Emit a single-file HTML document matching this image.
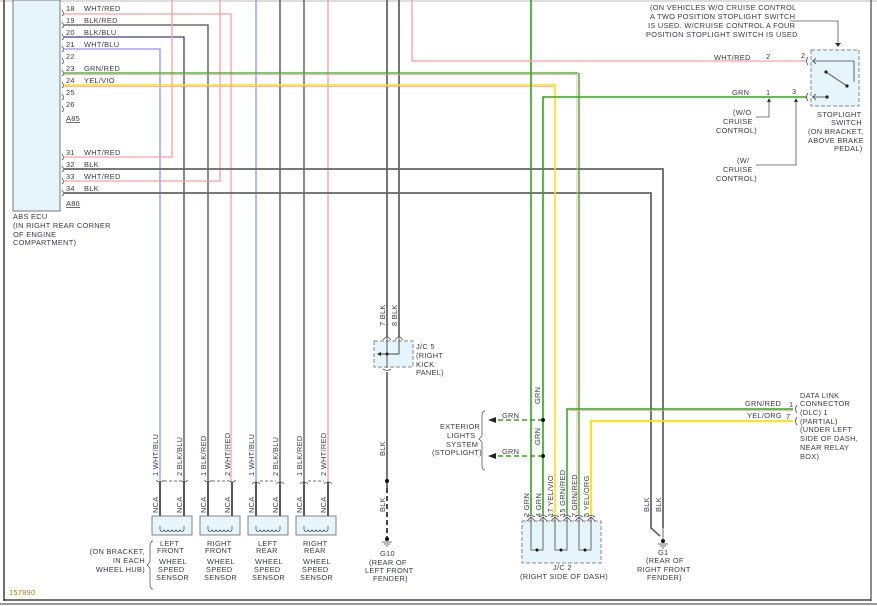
<!DOCTYPE html>
<html><head><meta charset="utf-8"><style>
html,body{margin:0;padding:0;background:#fff;width:877px;height:606px;overflow:hidden}
svg{display:block}
text{font-family:"Liberation Sans",sans-serif;font-size:7.4px;fill:#3a3a4a;letter-spacing:0.3px}
</style></head><body>
<svg width="877" height="606" viewBox="0 0 877 606" xmlns="http://www.w3.org/2000/svg">
<line x1="0" y1="1" x2="877" y2="1" stroke="#ddd" stroke-width="2"/>
<line x1="4" y1="0" x2="4" y2="601" stroke="#222" stroke-width="1.3"/>
<line x1="871" y1="0" x2="871" y2="601" stroke="#444" stroke-width="1.2"/>
<line x1="4" y1="600" x2="871" y2="600" stroke="#222" stroke-width="1.3"/>
<line x1="0" y1="604" x2="877" y2="604" stroke="#999" stroke-width="2"/>
<text x="9" y="595" style="fill:#b08000">157890</text>

<rect x="13" y="0" width="47" height="211" fill="#e6f4fb" stroke="#777" stroke-width="1"/>
<g>
<text x="66" y="11">18</text><text x="84" y="11">WHT/RED</text>
<text x="66" y="23">19</text><text x="84" y="23">BLK/RED</text>
<text x="66" y="35">20</text><text x="84" y="35">BLK/BLU</text>
<text x="66" y="47">21</text><text x="84" y="47">WHT/BLU</text>
<text x="66" y="59">22</text>
<text x="66" y="71">23</text><text x="84" y="71">GRN/RED</text>
<text x="66" y="83">24</text><text x="84" y="83">YEL/VIO</text>
<text x="66" y="95">25</text>
<text x="66" y="107">26</text>
<text x="66" y="121" text-decoration="underline">A85</text>
<text x="66" y="155">31</text><text x="84" y="155">WHT/RED</text>
<text x="66" y="167">32</text><text x="84" y="167">BLK</text>
<text x="66" y="179">33</text><text x="84" y="179">WHT/RED</text>
<text x="66" y="191">34</text><text x="84" y="191">BLK</text>
<text x="66" y="206" text-decoration="underline">A86</text>
<text x="13" y="219">ABS ECU</text>
<text x="13" y="228">(IN RIGHT REAR CORNER</text>
<text x="13" y="237">OF ENGINE</text>
<text x="13" y="245">COMPARTMENT)</text>
</g>
<g fill="none" stroke="#555" stroke-width="0.8">
<path d="M62 10 q3 4 0 6M62 22 q3 4 0 6M62 34 q3 4 0 6M62 46 q3 4 0 6M62 58 q3 4 0 6M62 70 q3 4 0 6M62 82 q3 4 0 6M62 94 q3 4 0 6M62 106 q3 4 0 6M62 154 q3 4 0 6M62 166 q3 4 0 6M62 178 q3 4 0 6M62 190 q3 4 0 6"/>
</g>

<g fill="none" stroke-width="1.3">
<path d="M64 14 H231 V482" stroke="#f4a0a0"/>
<path d="M64 25 H208 V482" stroke="#5a4a4a"/>
<path d="M64 37 H184 V482" stroke="#40407a"/>
<path d="M64 49 H160 V482" stroke="#9090ff"/>
<path d="M172 0 V157 H64" stroke="#f4a0a0"/>
<path d="M220 0 V181 H64" stroke="#f4a0a0"/>
<path d="M256 0 V482" stroke="#9090ff"/>
<path d="M280 0 V482" stroke="#40407a"/>
<path d="M304 0 V482" stroke="#5a4a4a"/>
<path d="M328 0 V482" stroke="#f4a0a0"/>
<path d="M64 169 H663 V528" stroke="#666" stroke-width="1.8"/>
<path d="M64 193 H651 V528 L660 536" stroke="#666" stroke-width="1.8"/>
<path d="M387 0 V336" stroke="#666" stroke-width="1.8"/>
<path d="M399 0 V336" stroke="#666" stroke-width="1.8"/>
<path d="M64 73 H578" stroke="#3aa022" stroke-width="1.3"/>
<path d="M64 74.5 H577 V515" stroke="#f4a0a0" stroke-width="0.8"/>
<path d="M579 73 V515" stroke="#3aa022"/>
<path d="M64 85 H555 V515" stroke="#ffe000" stroke-width="1.6"/>
<path d="M64 86.5 H553.5" stroke="#f090f0" stroke-width="0.8"/>
<path d="M531 0 V515" stroke="#3aa022" stroke-width="1.6"/>
<path d="M806 97 H543 V515" stroke="#3aa022" stroke-width="1.6"/>
<path d="M806 61 H412 V0" stroke="#f4a0a0"/>
<path d="M793 409 H567 V515" stroke="#3aa022" stroke-width="1.5"/>
<path d="M793 410.5 H568.5" stroke="#f4a0a0" stroke-width="0.7"/>
<path d="M793 421 H591 V515" stroke="#ffe000" stroke-width="1.8"/>
</g>

<text x="650" y="10">(ON VEHICLES W/O CRUISE CONTROL</text>
<text x="650" y="19">A TWO POSITION STOPLIGHT SWITCH</text>
<text x="648" y="28">IS USED. W/CRUISE CONTROL A FOUR</text>
<text x="646" y="37">POSITION STOPLIGHT SWITCH IS USED</text>
<path d="M790 21 H838 V44" fill="none" stroke="#555" stroke-width="0.8"/>
<path d="M835 43 L838 47 L841 43Z" fill="#333"/>
<rect x="811" y="50" width="48" height="56" fill="#e6f4fb" stroke="#888" stroke-width="1" stroke-dasharray="4,2"/>
<path d="M812 61 H854 V82" fill="none" stroke="#444" stroke-width="0.8"/>
<path d="M826 72 L847 86" stroke="#444" stroke-width="0.8"/>
<circle cx="826" cy="72" r="1.6" fill="#222"/><circle cx="847" cy="86" r="1.6" fill="#222"/>
<path d="M812 97 H827" stroke="#444" stroke-width="0.8"/><circle cx="827" cy="97" r="1.6" fill="#222"/>
<path d="M808 57 q-3 4 0 8 M808 93 q-3 4 0 8 M816 58 l-3 3 3 3 M816 94 l-3 3 3 3" fill="none" stroke="#444" stroke-width="0.8"/>
<text x="714" y="60">WHT/RED</text><text x="766" y="59">2</text><text x="801" y="58">2</text>
<text x="732" y="95">GRN</text><text x="766" y="95">1</text><text x="792" y="94">3</text>
<path d="M769 99 V117 H756" fill="none" stroke="#555" stroke-width="0.8"/><path d="M767 102 L769 98 L771 102Z" fill="#333"/>
<path d="M796 99 V165 H756" fill="none" stroke="#555" stroke-width="0.8"/><path d="M794 102 L796 98 L798 102Z" fill="#333"/>
<text x="733" y="115">(W/O</text><text x="723" y="124">CRUISE</text><text x="716" y="133">CONTROL)</text>
<text x="737" y="163">(W/</text><text x="723" y="172">CRUISE</text><text x="716" y="181">CONTROL)</text>
<text x="817" y="117">STOPLIGHT</text><text x="831" y="125">SWITCH</text>
<text x="808" y="134">(ON BRACKET,</text><text x="808" y="143">ABOVE BRAKE</text><text x="834" y="151">PEDAL)</text>

<rect x="374" y="341" width="39" height="26" fill="#e6f4fb" stroke="#888" stroke-dasharray="4,2"/>
<path d="M387 336 V368 M399 336 V354 H378" fill="none" stroke="#444" stroke-width="0.9"/>
<path d="M381 352 L377 354 L381 356Z" fill="#222"/><circle cx="387" cy="354" r="1.5" fill="#222"/>
<path d="M383 340 l4 -4 4 4 M395 340 l4 -4 4 4 M383 369 q4 3 8 0" fill="none" stroke="#555" stroke-width="0.8"/>
<path d="M387 372 V488" stroke="#666" stroke-width="1.8"/>
<path d="M387 488 V540" stroke="#333" stroke-width="1.8" stroke-dasharray="5,3"/>
<circle cx="387" cy="481" r="2" fill="#111"/><circle cx="387" cy="539" r="2" fill="#111"/>
<path d="M382 542 H392 M384 544 H390 M386 546 H388" stroke="#444" stroke-width="0.7"/>
<text x="416" y="349">J/C 5</text><text x="416" y="358">(RIGHT</text><text x="416" y="367">KICK</text><text x="416" y="375">PANEL)</text>
<text x="380" y="556">G10</text><text x="369" y="565">(REAR OF</text><text x="365" y="573">LEFT FRONT</text><text x="373" y="581">FENDER)</text>

<g>
<text transform="translate(385,326) rotate(-90)">7 BLK</text>
<text transform="translate(397,326) rotate(-90)">8 BLK</text>
<text transform="translate(385,456) rotate(-90)">BLK</text>
<text transform="translate(385,512) rotate(-90)">BLK</text>
<text transform="translate(158,476) rotate(-90)">1 WHT/BLU</text>
<text transform="translate(182,476) rotate(-90)">2 BLK/BLU</text>
<text transform="translate(206,476) rotate(-90)">1 BLK/RED</text>
<text transform="translate(230,476) rotate(-90)">2 WHT/RED</text>
<text transform="translate(254,476) rotate(-90)">1 WHT/BLU</text>
<text transform="translate(278,476) rotate(-90)">2 BLK/BLU</text>
<text transform="translate(302,476) rotate(-90)">1 BLK/RED</text>
<text transform="translate(326,476) rotate(-90)">2 WHT/RED</text>
<text transform="translate(158,513) rotate(-90)">NCA</text><text transform="translate(182,513) rotate(-90)">NCA</text>
<text transform="translate(206,513) rotate(-90)">NCA</text><text transform="translate(230,513) rotate(-90)">NCA</text>
<text transform="translate(254,513) rotate(-90)">NCA</text><text transform="translate(278,513) rotate(-90)">NCA</text>
<text transform="translate(302,513) rotate(-90)">NCA</text><text transform="translate(326,513) rotate(-90)">NCA</text>
<text transform="translate(540,404) rotate(-90)">GRN</text>
<text transform="translate(540,445) rotate(-90)">GRN</text>
<text transform="translate(529,517) rotate(-90)">2 GRN</text>
<text transform="translate(541,517) rotate(-90)">4 GRN</text>
<text transform="translate(553,517) rotate(-90)">17 YEL/VIO</text>
<text transform="translate(565,517) rotate(-90)">15 GRN/RED</text>
<text transform="translate(577,517) rotate(-90)">7 GRN/RED</text>
<text transform="translate(589,517) rotate(-90)">5 YEL/ORG</text>
<text transform="translate(649,512) rotate(-90)">BLK</text>
<text transform="translate(661,512) rotate(-90)">BLK</text>
</g>

<g fill="none">
<path d="M160 482 V530 M184 482 V530 M208 482 V530 M232 482 V530 M256 482 V530 M280 482 V530 M304 482 V530 M328 482 V530" stroke="#222" stroke-width="1.5"/>
</g>
<g stroke="#666" stroke-width="0.8" fill="#e6f4fb">
<rect x="152" y="516" width="40" height="19"/><rect x="200" y="516" width="40" height="19"/>
<rect x="248" y="516" width="40" height="19"/><rect x="296" y="516" width="40" height="19"/>
</g>
<g fill="none" stroke="#444" stroke-width="0.7">
<path d="M160 526 V530 q2 3 4 0 q2 3 4 0 q2 3 4 0 q2 3 4 0 q2 3 4 0 q2 3 4 0 V526"/>
<path d="M208 526 V530 q2 3 4 0 q2 3 4 0 q2 3 4 0 q2 3 4 0 q2 3 4 0 q2 3 4 0 V526"/>
<path d="M256 526 V530 q2 3 4 0 q2 3 4 0 q2 3 4 0 q2 3 4 0 q2 3 4 0 q2 3 4 0 V526"/>
<path d="M304 526 V530 q2 3 4 0 q2 3 4 0 q2 3 4 0 q2 3 4 0 q2 3 4 0 q2 3 4 0 V526"/>
<path d="M156 480 q4 4 8 0 M180 480 q4 4 8 0 M204 480 q4 4 8 0 M228 480 q4 4 8 0 M252 484 q4 -4 8 0 M276 484 q4 -4 8 0 M300 484 q4 -4 8 0 M324 484 q4 -4 8 0"/>
<path d="M164 481 H180 M212 481 H228 M260 481 H276 M308 481 H324" stroke-dasharray="3,2"/>
<path d="M153 541 q-3 0 -3 6 V562 l-3 3 3 3 V584 q0 5 3 5"/>
</g>
<text x="145" y="554" text-anchor="end">(ON BRACKET,</text><text x="145" y="563" text-anchor="end">IN EACH</text><text x="145" y="572" text-anchor="end">WHEEL HUB)</text>
<text x="160" y="546">LEFT</text><text x="157" y="553">FRONT</text><text x="159" y="564">WHEEL</text><text x="158" y="572">SPEED</text><text x="156" y="580">SENSOR</text>
<text x="207" y="546">RIGHT</text><text x="205" y="553">FRONT</text><text x="207" y="564">WHEEL</text><text x="206" y="572">SPEED</text><text x="204" y="580">SENSOR</text>
<text x="258" y="546">LEFT</text><text x="256" y="553">REAR</text><text x="255" y="564">WHEEL</text><text x="254" y="572">SPEED</text><text x="252" y="580">SENSOR</text>
<text x="303" y="546">RIGHT</text><text x="304" y="553">REAR</text><text x="303" y="564">WHEEL</text><text x="302" y="572">SPEED</text><text x="300" y="580">SENSOR</text>

<path d="M543 420 H495 M543 456 H495" stroke="#3aa022" stroke-width="1.6" stroke-dasharray="5,3"/>
<path d="M496 417 L488 420 L496 423Z M496 453 L488 456 L496 459Z" fill="#222"/>
<circle cx="543" cy="420" r="2" fill="#111"/><circle cx="543" cy="456" r="2" fill="#111"/>
<text x="502" y="418">GRN</text><text x="502" y="454">GRN</text>
<path d="M485 411 q-3 0 -3 5 V436 l-3 3 3 3 V465 q0 5 3 5" fill="none" stroke="#444" stroke-width="0.7"/>
<text x="440" y="429">EXTERIOR</text><text x="447" y="438">LIGHTS</text><text x="446" y="447">SYSTEM</text><text x="432" y="455">(STOPLIGHT)</text>

<rect x="522" y="521" width="79" height="42" fill="#e6f4fb" stroke="#888" stroke-dasharray="4,2"/>
<g fill="none" stroke="#444" stroke-width="0.8">
<path d="M531 518 V550 H543 V518 M555 518 V550 H567 V518 M579 518 V550 H591 V518"/>
<path d="M527 521 l4 -4 4 4 M539 521 l4 -4 4 4 M551 521 l4 -4 4 4 M563 521 l4 -4 4 4 M575 521 l4 -4 4 4 M587 521 l4 -4 4 4"/>
<path d="M527 517 q4 -3 8 0 M539 517 q4 -3 8 0 M551 517 q4 -3 8 0 M563 517 q4 -3 8 0 M575 517 q4 -3 8 0 M587 517 q4 -3 8 0"/>
</g>
<circle cx="537" cy="550" r="1.5" fill="#111"/><circle cx="561" cy="550" r="1.5" fill="#111"/><circle cx="585" cy="550" r="1.5" fill="#111"/>
<text x="553" y="570">J/C 2</text><text x="520" y="579">(RIGHT SIDE OF DASH)</text>

<circle cx="663" cy="541" r="2" fill="#111"/>
<path d="M663 528 V541 M658 544 H668 M660 546 H666 M662 548 H664" stroke="#444" stroke-width="0.8"/>
<text x="658" y="555">G1</text><text x="646" y="563">(REAR OF</text><text x="637" y="572">RIGHT FRONT</text><text x="647" y="580">FENDER)</text>

<path d="M797 405 q-3 4 0 8 M797 417 q-3 4 0 8" fill="none" stroke="#444" stroke-width="0.8"/>
<text x="745" y="406">GRN/RED</text><text x="789" y="407">1</text>
<text x="747" y="418">YEL/ORG</text><text x="786" y="419">7</text>
<text x="800" y="398">DATA LINK</text><text x="800" y="406">CONNECTOR</text><text x="800" y="415">(DLC) 1</text>
<text x="800" y="424">(PARTIAL)</text><text x="800" y="432">(UNDER LEFT</text><text x="800" y="441">SIDE OF DASH,</text>
<text x="800" y="450">NEAR RELAY</text><text x="800" y="459">BOX)</text>
</svg>
</body></html>
